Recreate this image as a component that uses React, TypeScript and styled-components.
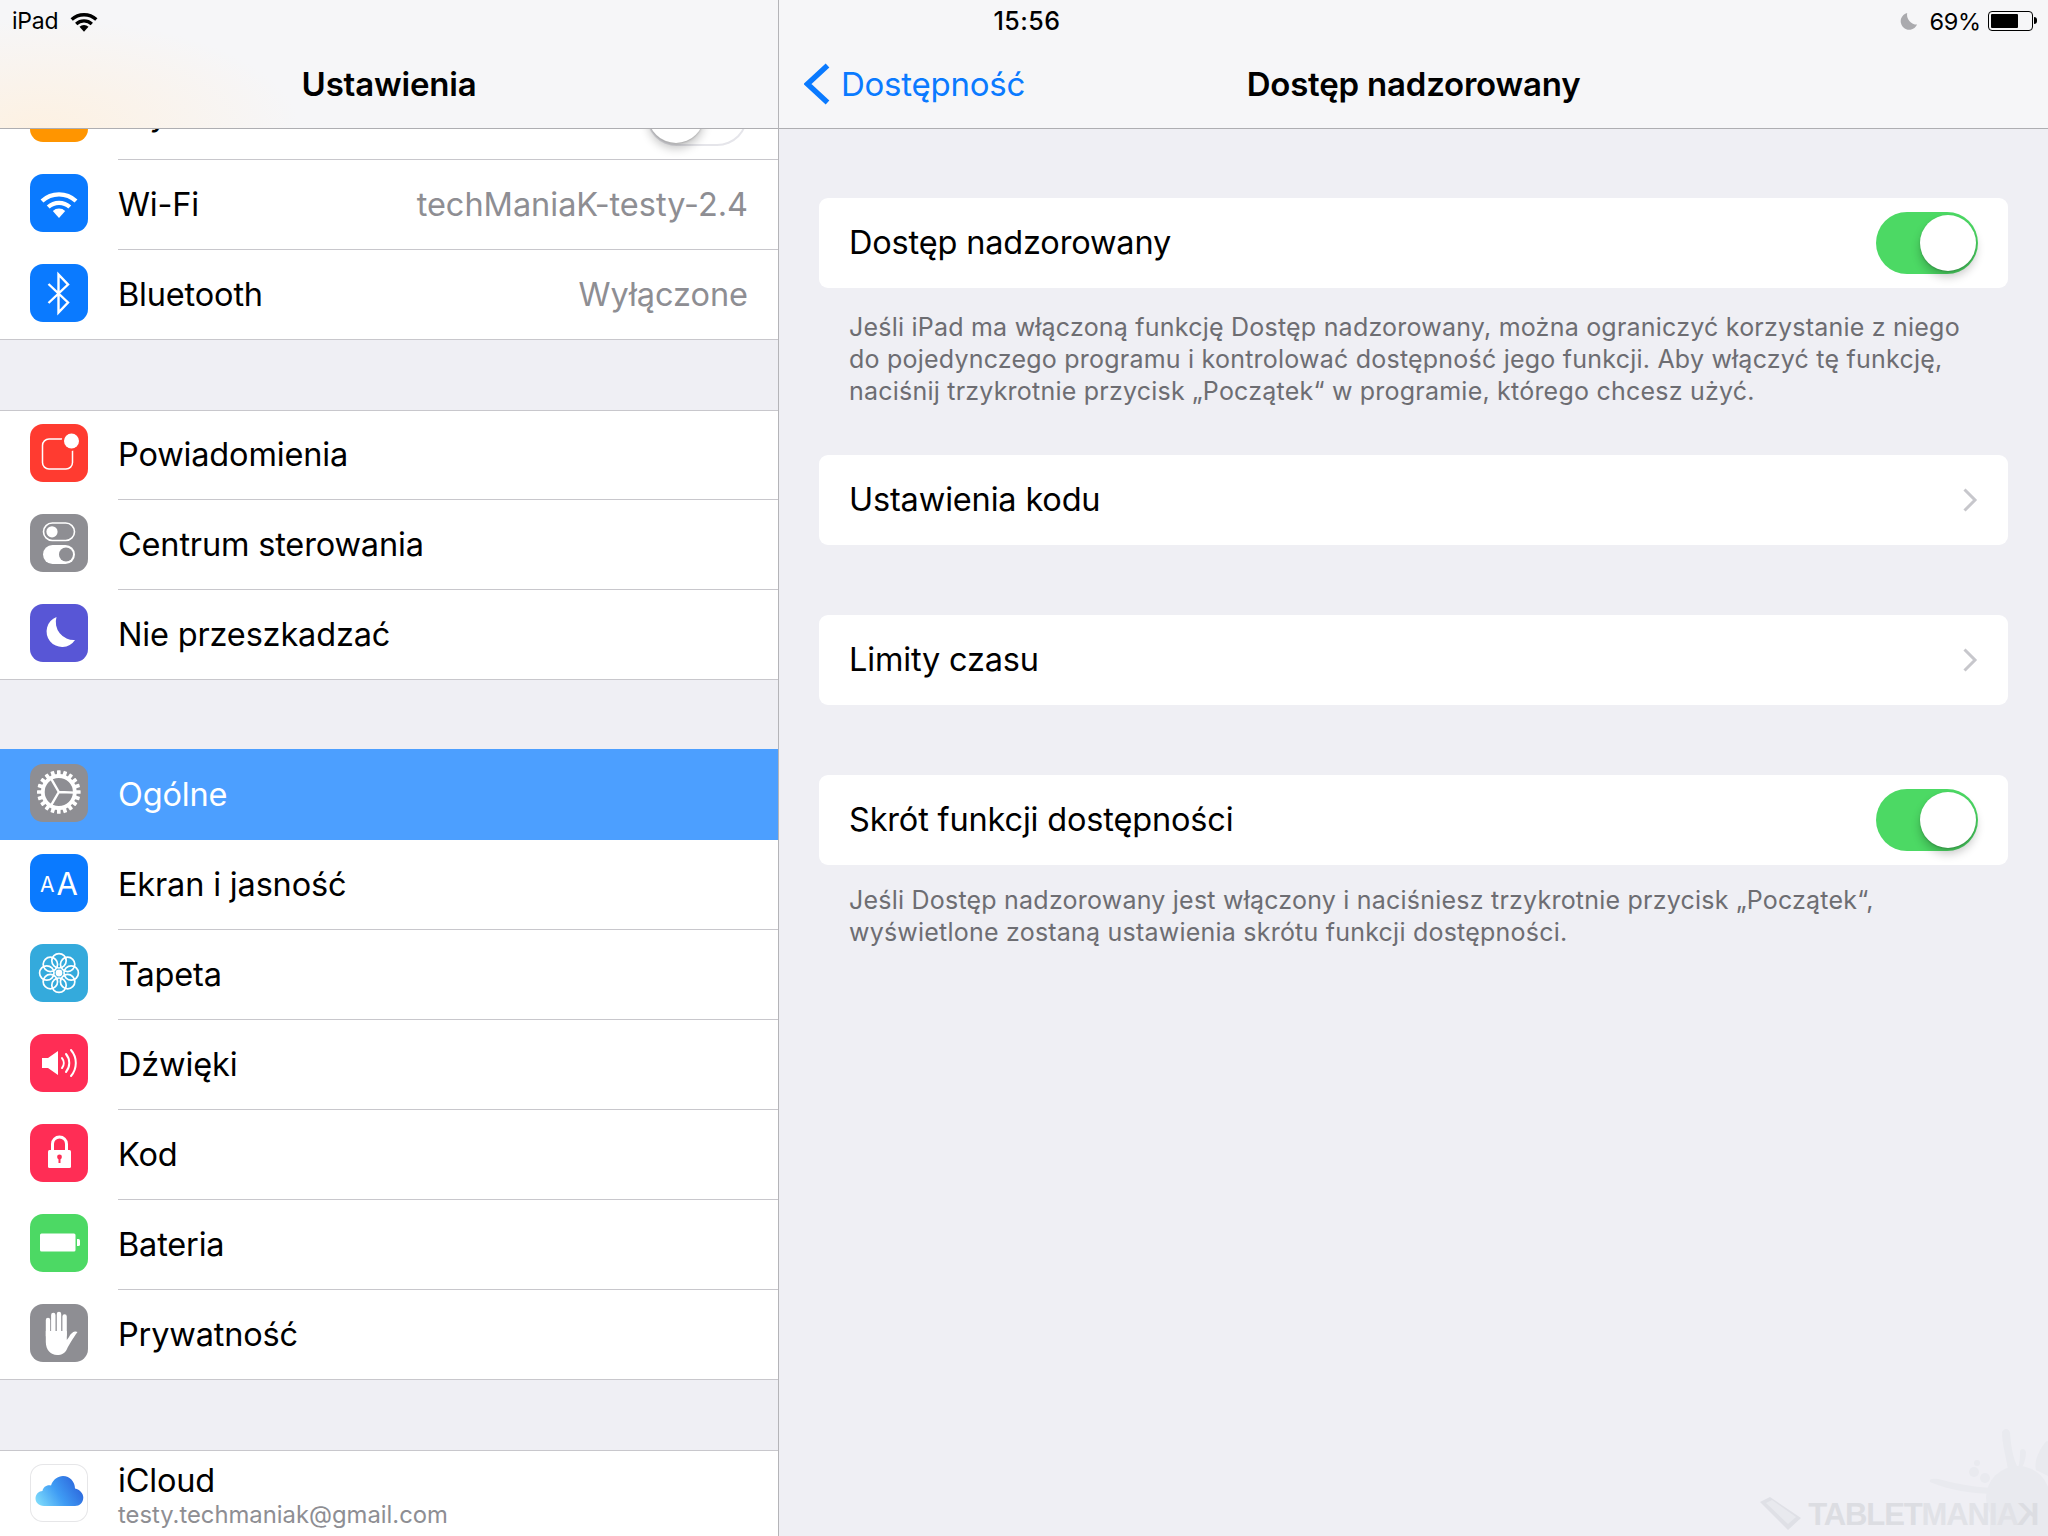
import React from "react";
import styled, { createGlobalStyle } from "styled-components";

const Global = createGlobalStyle`
  html, body { margin: 0; padding: 0; background: #efeff4; }
  * { box-sizing: border-box; }
`;
const FONT = `Inter, "Noto Sans", "Liberation Sans", sans-serif`;

const Screen = styled.div`
  position: relative; width: 2048px; height: 1536px; overflow: hidden;
  display: grid; grid-template-columns: 779px 1fr;
  background: #efeff4; font-family: ${FONT}; color: #000;
`;
const StatusBar = styled.div`
  position: absolute; z-index: 5; top: 0; left: 0; width: 100%; height: 40px;
  display: grid; grid-template-columns: 1fr auto 1fr; align-items: center;
  padding: 0 11px 0 12px; font-size: 23px; letter-spacing: -0.2px;
`;
const StatusLeft = styled.div`display: flex; align-items: center; gap: 5px;`;
const StatusTime = styled.div`font-weight: 500; font-size: 25px; letter-spacing: 0.5px; margin-left: 5px;`;
const StatusRight = styled.div`display: flex; align-items: center; justify-content: flex-end; gap: 11px;`;
const Percent = styled.span`margin-right: -4px; font-size: 23.5px; letter-spacing: -0.2px;`;
const BatteryBody = styled.div`
  position: relative; width: 45px; height: 20px; border: 1.5px solid #000; border-radius: 4px; padding: 2px;
  margin-right: 4px;
  &::after { content: ""; position: absolute; right: -5px; top: 5px; width: 3px; height: 7px; background: #000; border-radius: 0 3px 3px 0; }
`;
const BatteryFill = styled.div`height: 100%; background: #000; border-radius: 1px;`;

const Sidebar = styled.aside`
  background: #efeff4; border-right: 1px solid #b4b4b8; height: 1536px; overflow: hidden;
`;
const NavBar = styled.header<{ $glow?: boolean }>`
  position: relative; z-index: 2; height: 129px; padding-top: 40px;
  display: grid; grid-template-columns: 1fr auto 1fr; align-items: center;
  background: ${(p) => p.$glow
    ? "radial-gradient(ellipse 260px 110px at 40px 128px, #fdf1e2 0%, rgba(246,246,248,0) 100%), #f6f6f8"
    : "#f6f6f8"};
  border-bottom: 1px solid #aeaeb2;
`;
const NavTitle = styled.h1`
  grid-column: 2; margin: 0; font-size: 33px; font-weight: 600; letter-spacing: -0.2px; white-space: nowrap; line-height: 88px;
`;
const BackLink = styled.div`
  grid-column: 1; display: flex; align-items: center; gap: 11px; padding-left: 25px; color: #0a7aff;
  font-size: 33px; letter-spacing: -0.25px; white-space: nowrap;
`;
const List = styled.div`margin-top: -59px; display: flex; flex-direction: column; gap: 70px;`;
const Group = styled.section<{ $noLine?: boolean }>`
  position: relative; background: #fff;
  ${(p) => p.$noLine ? "" : `&::before { content: ""; position: absolute; z-index: 1; top: 0; left: 0; right: 0; height: 1px; background: #c8c7cc; }`}
`;
const Row = styled.div<{ $selected?: boolean; $last?: boolean }>`
  height: ${(p) => (p.$selected ? 91 : 90)}px; ${(p) => (p.$selected ? "margin-top: -1px;" : "")}
  display: flex; align-items: stretch; padding-left: 30px;
  background: ${(p) => (p.$selected ? "#4c9fff" : "#fff")};
  color: ${(p) => (p.$selected ? "#fff" : "#000")};
  ${(p) => p.$last ? "border-bottom: 1px solid #c8c7cc;" : ""}
`;
const Tile = styled.div<{ $bg: string; $border?: boolean }>`
  flex: none; align-self: center; width: 58px; height: 58px; margin-top: -4px; border-radius: 13px;
  background: ${(p) => p.$bg}; display: flex; align-items: center; justify-content: center;
  ${(p) => p.$border ? "box-shadow: inset 0 0 0 1px #e6e6e8;" : ""}
  svg { display: block; }
`;
const RowBody = styled.div<{ $flat?: boolean }>`
  flex: 1; min-width: 0; margin-left: 30px; padding-right: 30px; display: flex; align-items: center; justify-content: space-between;
  ${(p) => p.$flat ? "" : "border-bottom: 1px solid #c8c7cc;"}
`;
const Label = styled.span`font-size: 32.5px; letter-spacing: -0.17px; white-space: nowrap;`;
const CardLabel = styled(Label)`margin-top: -2px;`;
const Value = styled.span`font-size: 32.5px; letter-spacing: -0.03px; color: #8e8e93; white-space: nowrap;`;
const Stack = styled.div`display: flex; flex-direction: column; margin-top: 1px;`;
const SubLabel = styled.span`font-size: 23.8px; color: #8e8e93; margin-top: 0;`;
const SmallA = styled.span`font-size: 21px; color: #fff; margin-right: 2px; margin-top: 3px;`;
const BigA = styled.span`font-size: 31px; color: #fff;`;

const Main = styled.main`display: flex; flex-direction: column;`;
const Content = styled.div`padding: 69px 40px 0; display: flex; flex-direction: column;`;
const Card = styled.div<{ $gap?: number }>`
  height: 90px; border-radius: 9px; background: #fff; padding: 0 30px 0 30px;
  display: flex; align-items: center; justify-content: space-between; margin-top: ${(p) => p.$gap ?? 0}px;
`;
const Note = styled.p<{ $top: number }>`
  margin: 0; padding: ${(p) => p.$top}px 30px 0; font-size: 25px; line-height: 32px; color: #6d6d72; letter-spacing: 0.22px; white-space: nowrap;
`;
const Track = styled.div<{ $on: boolean }>`
  position: relative; width: 102px; height: 62px; border-radius: 31px; flex: none;
  background: ${(p) => (p.$on ? "#4cd964" : "#fff")};
  ${(p) => (p.$on ? "" : "box-shadow: inset 0 0 0 2px #e5e5ea;")}
`;
const Knob = styled.div<{ $on: boolean }>`
  position: absolute; top: 3px; ${(p) => (p.$on ? "right: 2px;" : "left: 2px;")}
  width: 56px; height: 56px; border-radius: 50%; background: #fff;
  box-shadow: 0 6px 10px rgba(0,0,0,.22), 0 1px 2px rgba(0,0,0,.18);
`;
const Watermark = styled.div`
  position: absolute; right: 9px; bottom: 5px; display: flex; align-items: center; gap: 6px;
`;
const WatermarkText = styled.span`
  font-family: "Liberation Sans", sans-serif; font-weight: 700; font-size: 31px; line-height: 33px; letter-spacing: -1.1px; color: #dcdde2;
`;
const WatermarkLight = styled.span`color: #e1e2e7;`;
const MirrorK = styled.span`display: inline-block; transform: scaleX(-1);`;
const Splat = styled.svg`position: absolute; right: 0; bottom: 0;`;

const Wifi = ({ c = "#fff", w = 58, s = 4.2 }: { c?: string; w?: number; s?: number }) => (
  <svg width={w} height={w} viewBox="0 0 58 58" fill="none" aria-hidden>
    <path d="M12 27 A 25 25 0 0 1 46 27" stroke={c} strokeWidth={s} />
    <path d="M18.2 33 A 16 16 0 0 1 39.8 33" stroke={c} strokeWidth={s} />
    <path d="M29 44 L22.8 37 A 9 9 0 0 1 35.2 37 Z" fill={c} />
  </svg>
);
const G = ({ children }: { children: React.ReactNode }) => (
  <svg width="58" height="58" viewBox="0 0 58 58" fill="none" aria-hidden>{children}</svg>
);
const Bluetooth = () => (
  <G><path d="M18.5 20 L38 38.5 L28.5 48.5 V10.5 L38 20.5 L18.5 39" stroke="#fff" strokeWidth="2.4" /></G>
);
const Notif = () => (
  <G>
    <rect x="12.5" y="15" width="30" height="30" rx="6.5" stroke="#fff" strokeWidth="1.5" />
    <circle cx="41.5" cy="17" r="10" fill="#ff3b30" />
    <circle cx="41.5" cy="17" r="7.5" fill="#fff" />
  </G>
);
const Control = () => (
  <G>
    <rect x="13.5" y="9" width="31" height="17.5" rx="8.75" stroke="#fff" strokeWidth="1.6" />
    <circle cx="22" cy="17.8" r="5.6" fill="#fff" />
    <rect x="13" y="31" width="32" height="19" rx="9.5" fill="#fff" />
    <circle cx="36" cy="40.5" r="7" fill="#8e8e93" />
  </G>
);
const Moon = () => (
  <G><path d="M26.5 13 A 15.5 15.5 0 1 0 45 36 A 18 18 0 0 1 26.5 13 Z" fill="#fff" /></G>
);
const Gear = () => (
  <G>
    {Array.from({ length: 20 }, (_, i) => (
      <rect key={i} x="27" y="6.2" width="3.6" height="7" fill="#fff" rx="0.6" transform={`rotate(${i * 18} 28.8 28)`} />
    ))}
    <circle cx="28.8" cy="28" r="16" stroke="#fff" strokeWidth="3.8" />
    <path d="M28.8 28 L20.8 14.1 M28.8 28 L44.8 28.6 M28.8 28 L20.8 41.9" stroke="#fff" strokeWidth="2.4" />
  </G>
);
const Flower = () => (
  <G>
    {Array.from({ length: 8 }, (_, i) => (
      <circle key={i} cx="29" cy="16.8" r="7.2" stroke="#fff" strokeWidth="1.7" transform={`rotate(${i * 45} 29 29)`} />
    ))}
    <circle cx="29" cy="29" r="3.4" fill="#fff" />
  </G>
);
const Sound = () => (
  <G>
    <path d="M12 24 H18 L28 17 V41 L18 34 H12 Z" fill="#fff" />
    <path d="M32 24 A 8 8 0 0 1 32 34 M36 20 A 14 14 0 0 1 36 38 M41 16 A 20 20 0 0 1 41 42" stroke="#fff" strokeWidth="2" strokeLinecap="round" />
  </G>
);
const Lock = () => (
  <G>
    <path d="M22.5 27 V20 A 7 7 0 0 1 36.5 20 V27" stroke="#fff" strokeWidth="3" />
    <rect x="18" y="26" width="23" height="18" rx="1.5" fill="#fff" />
    <circle cx="29.5" cy="33" r="2.4" fill="#ff2d55" />
    <rect x="28.5" y="33" width="2" height="6" fill="#ff2d55" />
  </G>
);
const BatteryGlyph = () => (
  <G>
    <rect x="10" y="19.5" width="35.5" height="18" rx="1.5" fill="#fff" />
    <path d="M47 25 H48.5 Q50 25 50 26.5 V30.5 Q50 32 48.5 32 H47 Z" fill="#fff" />
  </G>
);
const Hand = () => (
  <G>
    <path d="M18 16 V32 M23.3 11 V30 M29 10 V30 M34.6 12.5 V31" stroke="#fff" strokeWidth="4.4" strokeLinecap="round" />
    <path d="M15.8 27 V38 C15.8 46 21 51 27 51 C32 51 35 49 37 45 C39 41 43 34 47.5 28 C46 27 42 27 39 33 L36.8 36 V27 Z" fill="#fff" />
  </G>
);
const Cloud = () => (
  <svg width="58" height="58" viewBox="0 0 58 58" fill="none" aria-hidden>
    <defs>
      <linearGradient id="cl" x1="0" y1="0.85" x2="1" y2="0.45">
        <stop offset="0" stopColor="#7fdcfb" />
        <stop offset="0.5" stopColor="#3f9cf4" />
        <stop offset="1" stopColor="#2c66dc" />
      </linearGradient>
    </defs>
    <path d="M14 42 C8.5 42 5.5 38 5.5 34.5 C5.5 30 9 27 12.5 27 C13 23 17 20.5 21 21.5 C23 15.5 28 12 33 12 C40 12 45 18 45 24.5 C50 25.5 53.3 29.5 53.3 33.5 C53.3 38.5 49.5 42 45 42 Z" fill="url(#cl)" />
  </svg>
);
const Chevron = () => (
  <svg width="16" height="26" viewBox="0 0 16 26" fill="none" aria-hidden>
    <path d="M2.5 2.5 L13 13 L2.5 23.5" stroke="#c7c7cc" strokeWidth="3" />
  </svg>
);
const BackChevron = () => (
  <svg width="26" height="42" viewBox="0 0 26 42" fill="none" aria-hidden>
    <path d="M23.5 2.5 L3.5 21 L23.5 39.5" stroke="#0a7aff" strokeWidth="5.4" />
  </svg>
);

type Item = { label: string; icon: React.ReactNode; bg: string; value?: string; sel?: boolean; toggle?: boolean };

const G1: Item[] = [
  { label: "Tryb samolot", icon: null, bg: "#ff9500", toggle: true },
  { label: "Wi-Fi", icon: <Wifi />, bg: "#0a7aff", value: "techManiaK-testy-2.4" },
  { label: "Bluetooth", icon: <Bluetooth />, bg: "#0a7aff", value: "Wyłączone" },
];
const G2: Item[] = [
  { label: "Powiadomienia", icon: <Notif />, bg: "#ff3b30" },
  { label: "Centrum sterowania", icon: <Control />, bg: "#8e8e93" },
  { label: "Nie przeszkadzać", icon: <Moon />, bg: "#5856d6" },
];
const G3: Item[] = [
  { label: "Ogólne", icon: <Gear />, bg: "#8e8e93", sel: true },
  { label: "Ekran i jasność", icon: <><SmallA>A</SmallA><BigA>A</BigA></>, bg: "#0a7aff" },
  { label: "Tapeta", icon: <Flower />, bg: "#34aadc" },
  { label: "Dźwięki", icon: <Sound />, bg: "#ff2d55" },
  { label: "Kod", icon: <Lock />, bg: "#ff2d55" },
  { label: "Bateria", icon: <BatteryGlyph />, bg: "#4cd964" },
  { label: "Prywatność", icon: <Hand />, bg: "#8e8e93" },
];

const Rows = ({ items }: { items: Item[] }) => (
  <Group $noLine={items[0].sel}>
    {items.map((it, i) => {
      const last = i === items.length - 1;
      return (
        <Row key={it.label} $selected={it.sel} $last={last}>
          <Tile $bg={it.bg}>{it.icon}</Tile>
          <RowBody $flat={last || it.sel}>
            <Label>{it.label}</Label>
            {it.value && <Value>{it.value}</Value>}
            {it.toggle && <Track $on={false}><Knob $on={false} /></Track>}
          </RowBody>
        </Row>
      );
    })}
  </Group>
);

const Toggle = () => <Track $on><Knob $on /></Track>;

export default function App() {
  return (
    <>
      <Global />
      <Screen>
        <StatusBar>
          <StatusLeft>iPad <Wifi c="#000" w={42} s={4.6} /></StatusLeft>
          <StatusTime>15:56</StatusTime>
          <StatusRight>
            <svg width="18" height="18" viewBox="0 0 20 20" aria-hidden>
              <path d="M8 1 A 9.5 9.5 0 1 0 19 14 A 11 11 0 0 1 8 1 Z" fill="#aaaaae" />
            </svg>
            <Percent>69%</Percent>
            <BatteryBody><BatteryFill style={{ width: "69%" }} /></BatteryBody>
          </StatusRight>
        </StatusBar>

        <Sidebar>
          <NavBar $glow><NavTitle>Ustawienia</NavTitle></NavBar>
          <List>
            <Rows items={G1} />
            <Rows items={G2} />
            <Rows items={G3} />
            <Group>
              <Row $last>
                <Tile $bg="#fff" $border><Cloud /></Tile>
                <RowBody $flat>
                  <Stack>
                    <Label>iCloud</Label>
                    <SubLabel>testy.techmaniak@gmail.com</SubLabel>
                  </Stack>
                </RowBody>
              </Row>
            </Group>
          </List>
        </Sidebar>

        <Main>
          <NavBar>
            <BackLink><BackChevron />Dostępność</BackLink>
            <NavTitle>Dostęp nadzorowany</NavTitle>
          </NavBar>
          <Content>
            <Card><CardLabel>Dostęp nadzorowany</CardLabel><Toggle /></Card>
            <Note $top={23}>
              Jeśli iPad ma włączoną funkcję Dostęp nadzorowany, można ograniczyć korzystanie z niego<br />
              do pojedynczego programu i kontrolować dostępność jego funkcji. Aby włączyć tę funkcję,<br />
              naciśnij trzykrotnie przycisk „Początek“ w programie, którego chcesz użyć.
            </Note>
            <Card $gap={48}><CardLabel>Ustawienia kodu</CardLabel><Chevron /></Card>
            <Card $gap={70}><CardLabel>Limity czasu</CardLabel><Chevron /></Card>
            <Card $gap={70}><CardLabel>Skrót funkcji dostępności</CardLabel><Toggle /></Card>
            <Note $top={19}>
              Jeśli Dostęp nadzorowany jest włączony i naciśniesz trzykrotnie przycisk „Początek“,<br />
              wyświetlone zostaną ustawienia skrótu funkcji dostępności.
            </Note>
          </Content>
        </Main>

        <Splat width="120" height="130" viewBox="0 0 120 130" aria-hidden>
          <g fill="#e9eaef">
            <circle cx="90" cy="92" r="32" />
            <rect x="62" y="92" width="58" height="38" />
            <path d="M2 76 C0 72 8 72 14 74 C30 78 50 82 68 82 L68 88 C45 88 20 84 2 76 Z" />
            <path d="M74 26 C76 22 81 22 82 27 C83 38 84 50 90 62 L80 64 C78 50 74 38 74 26 Z" />
            <path d="M92 46 C92 42 97 42 98 46 C98 52 96 58 94 62 L90 62 C92 56 92 50 92 46 Z" />
            <path d="M108 64 C106 56 110 46 116 38 C118 35 120 34 120 36 V70 Z" />
            <circle cx="46" cy="66" r="5" />
            <circle cx="57" cy="72" r="5" />
            <circle cx="49" cy="57" r="3" />
          </g>
        </Splat>
        <Watermark>
          <svg width="42" height="34" viewBox="0 0 42 34" aria-hidden>
            <path d="M0 5 L10 0 L41 21 L28 33 Z" fill="#dfe0e6" />
            <path d="M6 6 L12 3 L36 20 L28 27 Z" fill="#e8e9ee" />
          </svg>
          <WatermarkText>TABLET<WatermarkLight>MANIA</WatermarkLight><MirrorK>K</MirrorK></WatermarkText>
        </Watermark>
      </Screen>
    </>
  );
}
